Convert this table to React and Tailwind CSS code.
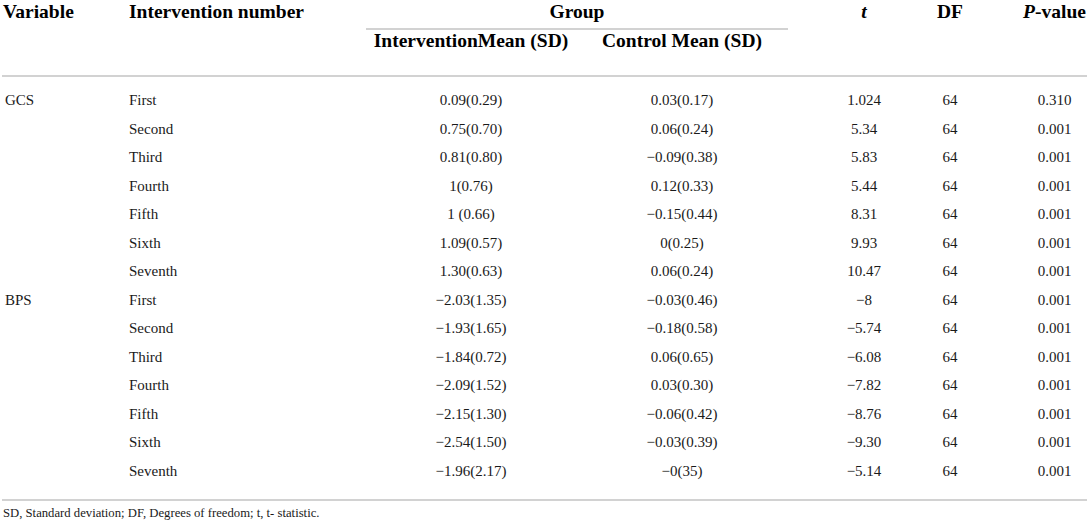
import React from 'react';

const rows = [
  ['GCS', 'First', '0.09(0.29)', '0.03(0.17)', '1.024', '64', '0.310'],
  ['', 'Second', '0.75(0.70)', '0.06(0.24)', '5.34', '64', '0.001'],
  ['', 'Third', '0.81(0.80)', '\u22120.09(0.38)', '5.83', '64', '0.001'],
  ['', 'Fourth', '1(0.76)', '0.12(0.33)', '5.44', '64', '0.001'],
  ['', 'Fifth', '1 (0.66)', '\u22120.15(0.44)', '8.31', '64', '0.001'],
  ['', 'Sixth', '1.09(0.57)', '0(0.25)', '9.93', '64', '0.001'],
  ['', 'Seventh', '1.30(0.63)', '0.06(0.24)', '10.47', '64', '0.001'],
  ['BPS', 'First', '\u22122.03(1.35)', '\u22120.03(0.46)', '\u22128', '64', '0.001'],
  ['', 'Second', '\u22121.93(1.65)', '\u22120.18(0.58)', '\u22125.74', '64', '0.001'],
  ['', 'Third', '\u22121.84(0.72)', '0.06(0.65)', '\u22126.08', '64', '0.001'],
  ['', 'Fourth', '\u22122.09(1.52)', '0.03(0.30)', '\u22127.82', '64', '0.001'],
  ['', 'Fifth', '\u22122.15(1.30)', '\u22120.06(0.42)', '\u22128.76', '64', '0.001'],
  ['', 'Sixth', '\u22122.54(1.50)', '\u22120.03(0.39)', '\u22129.30', '64', '0.001'],
  ['', 'Seventh', '\u22121.96(2.17)', '\u22120(35)', '\u22125.14', '64', '0.001'],
];

const App = () => {
  return (
    <div className="w-[1089px] h-[527px] bg-white pl-[2px] pt-0 font-['Liberation_Serif',serif] text-[#1a1a1a]">
      <table className="table-fixed border-collapse w-[1085px]">
        <colgroup>
          <col className="w-[126px]" />
          <col className="w-[238px]" />
          <col className="w-[210px]" />
          <col className="w-[212px]" />
          <col className="w-[122px]" />
          <col className="w-[80px]" />
          <col className="w-[97px]" />
        </colgroup>
        <thead className="text-[19.5px] font-bold text-black">
          <tr className="h-[30px]">
            <th rowSpan={2} className="text-left align-top pt-[1px] pl-[1px] leading-[22px] font-bold">Variable</th>
            <th rowSpan={2} className="text-left align-top pt-[1px] pl-[1px] leading-[22px] font-bold">Intervention number</th>
            <th colSpan={2} className="align-top p-0 font-bold">
              <div className="pt-[1px] leading-[22px] h-[28px] text-center">Group</div>
              <div className="border-b-2 border-[#d2d2d2]" />
            </th>
            <th rowSpan={2} className="align-top pt-[1px] pl-[30px] leading-[22px] text-center italic font-bold">t</th>
            <th rowSpan={2} className="align-top pt-[1px] leading-[22px] text-center font-bold">DF</th>
            <th rowSpan={2} className="align-top pt-[1px] pl-[32px] leading-[22px] text-center font-bold whitespace-nowrap">
              <span className="italic">P</span>-value
            </th>
          </tr>
          <tr className="h-[46px] border-b-2 border-[#d2d2d2]">
            <th className="align-top pt-[0px] leading-[22px] text-center font-bold whitespace-nowrap">InterventionMean (SD)</th>
            <th className="align-top pt-[0px] leading-[22px] text-center font-bold whitespace-nowrap">Control Mean (SD)</th>
          </tr>
        </thead>
        <tbody className="text-[15px]">
          <tr className="h-[10px]"><td colSpan={7} /></tr>
          {rows.map((r, i) => (
            <tr key={i} className="h-[28.5px]">
              <td className="pl-[3px] leading-[20px]">{r[0]}</td>
              <td className="pl-[1px] leading-[20px]">{r[1]}</td>
              <td className="text-center leading-[20px]">{r[2]}</td>
              <td className="text-center leading-[20px]">{r[3]}</td>
              <td className="text-center pl-[30px] leading-[20px]">{r[4]}</td>
              <td className="text-center leading-[20px]">{r[5]}</td>
              <td className="text-center pl-[32px] leading-[20px]">{r[6]}</td>
            </tr>
          ))}
          <tr className="h-[15px] border-b-2 border-[#d2d2d2]"><td colSpan={7} /></tr>
        </tbody>
      </table>
      <p className="mt-[4px] pl-[1px] text-[12.7px] leading-[16px]">
        SD, Standard deviation; DF, Degrees of freedom; t, t- statistic.
      </p>
    </div>
  );
};

export default App;
